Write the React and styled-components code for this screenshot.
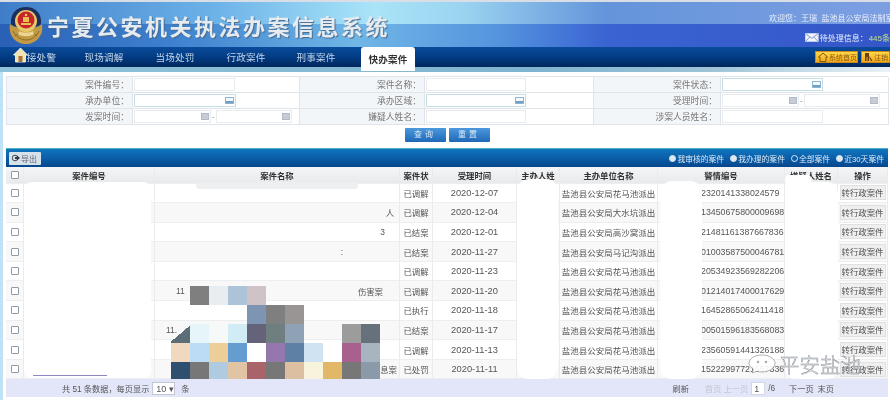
import React from "react";
import styled, { createGlobalStyle } from "styled-components";

const GlobalStyle = createGlobalStyle`
  html, body {
    margin: 0;
    padding: 0;
    background: #fff;
  }
  body {
    font-family: "Liberation Sans", "Noto Sans CJK SC", sans-serif;
    color: #444;
  }
  * {
    box-sizing: border-box;
  }
`;

const Page = styled.div`
  position: relative;
  width: 890px;
  height: 400px;
  overflow: hidden;
  background: #fff;
  filter: blur(0.45px);
`;

const Header = styled.header`
  display: flex;
  height: 47px;
  padding: 4px 0 0 8px;
  border-top: 2px solid #d8dde6;
  background:
    linear-gradient(90deg, #3f7dc8 0%, #6cb2e8 24%, #a9e4f8 42%, #9ad4f0 52%, #6494da 68%, #7d9fe2 100%) 0 0 / 100% 22px no-repeat,
    linear-gradient(90deg, #2a60b6 0%, #3f82cf 20%, #70b6e6 40%, #5494de 56%, #3a64d2 68%, #3556c8 100%) 0 22px / 100% 24px no-repeat;
`;

const Title = styled.h1`
  margin: 4px 0 0 3px;
  font-family: "Noto Sans CJK SC", sans-serif;
  font-size: 22px;
  line-height: 30px;
  font-weight: 700;
  letter-spacing: 2.5px;
  white-space: nowrap;
  color: #e6ebf0;
  text-shadow: 1px 1px 1px #4a6a8c;
`;

const UserBox = styled.div`
  margin-left: auto;
  width: 121px;
  overflow: hidden;
  white-space: nowrap;
  font-size: 8px;
  color: #e8effc;
`;

const Welcome = styled.div`
  margin-top: 6px;
  height: 14px;
  line-height: 14px;
`;

const Pending = styled.div`
  display: flex;
  align-items: center;
  gap: 1px;
  margin: 5px 0 0 36px;
  height: 12px;
  b {
    font-weight: 400;
    color: #bfe38a;
  }
`;

const Nav = styled.nav`
  display: flex;
  align-items: flex-start;
  height: 20px;
  padding-left: 13px;
  background: linear-gradient(180deg, #0a4c9c 0%, #023a80 55%, #02275c 100%);
`;

const NavItem = styled.div`
  position: relative;
  z-index: 1;
  display: flex;
  align-items: center;
  justify-content: center;
  flex: none;
  width: ${(p) => p.$w}px;
  height: ${(p) => (p.$active ? "24px" : "20px")};
  margin-left: ${(p) => p.$ml || 0}px;
  font-size: 9.6px;
  letter-spacing: 0.2px;
  white-space: nowrap;
  color: ${(p) => (p.$active ? "#333" : "#c3d5e8")};
  font-weight: ${(p) => (p.$active ? 700 : 400)};
  background: ${(p) => (p.$active ? "#fff" : "transparent")};
  border-radius: ${(p) => (p.$active ? "3px 3px 0 0" : "0")};
`;

const NavTools = styled.div`
  display: flex;
  gap: 3px;
  margin: 4px 0 0 auto;
`;

const ToolButton = styled.div`
  display: flex;
  align-items: center;
  gap: 1px;
  height: 12px;
  width: ${(p) => p.$w}px;
  padding-left: 2px;
  font-size: 7px;
  color: #8a5a10;
  background: linear-gradient(180deg, #ffd84a, #f2a81c);
  border: 1px solid #c98a18;
`;

const Strip = styled.div`
  height: 5px;
  background: linear-gradient(90deg, #8fc3da 0%, #7fb4d0 60%, #9fc4d8 80%, #eaf2f6 100%);
`;

const Main = styled.main`
  height: 328px;
  padding: 4px 2px 0 6px;
  background: linear-gradient(90deg, #bfe2f6 0, #bfe2f6 3px, #fff 3px);
`;

const FormGrid = styled.div`
  display: grid;
  grid-template-columns: 126px 167px 125px 169px 127px 168px;
  grid-auto-rows: 16px;
  border-top: 1px solid #dfe5ea;
  border-left: 1px solid #dfe5ea;
`;

const FormLabel = styled.div`
  display: flex;
  align-items: center;
  justify-content: flex-end;
  padding-right: 3px;
  font-size: 8.8px;
  color: #777;
  background: #f3f6f9;
  border-right: 1px solid #dfe5ea;
  border-bottom: 1px solid #dfe5ea;
`;

const FormValue = styled.div`
  display: flex;
  align-items: center;
  gap: 1px;
  padding-left: 1px;
  border-right: 1px solid #dfe5ea;
  border-bottom: 1px solid #dfe5ea;
  font-size: 8px;
  color: #888;
`;

const Field = styled.div`
  display: flex;
  align-items: center;
  justify-content: flex-end;
  width: ${(p) => p.$w}px;
  height: 13px;
  padding-right: 1px;
  background: #fff;
  border: 1px solid ${(p) => (p.$select ? "#c6dde6" : "#e9ecef")};
`;

const SelectIcon = styled.span`
  width: 9px;
  height: 7px;
  background: linear-gradient(180deg, #f4f8fb 0 55%, #6fa0c6 55%);
  border: 1px solid #8db4d0;
`;

const DateIcon = styled.span`
  width: 8px;
  height: 7px;
  background: #c8ccd6;
  border: 1px solid #b4b9c6;
`;

const FormActions = styled.div`
  display: flex;
  justify-content: center;
  gap: 3px;
  padding-top: 3px;
`;

const BlueButton = styled.div`
  width: 41px;
  height: 14px;
  line-height: 14px;
  text-align: center;
  font-size: 8px;
  letter-spacing: 3px;
  color: #d9e8f6;
  background: linear-gradient(180deg, #4c98dc, #1f68b8);
  border-radius: 1px;
`;

const Toolbar = styled.div`
  display: flex;
  align-items: center;
  justify-content: space-between;
  height: 19px;
  margin-top: 6px;
  padding: 0 4px 0 3px;
  border-top: 1px solid #4fb0c8;
  background: linear-gradient(180deg, #0f76bd 0%, #0a5ea8 50%, #06468c 100%);
`;

const ExportButton = styled.div`
  display: flex;
  align-items: center;
  gap: 1px;
  width: 32px;
  height: 13px;
  padding-left: 3px;
  font-size: 8px;
  color: #667;
  background: #d6e2ea;
  border-radius: 1px;
`;

const Filters = styled.div`
  display: flex;
  gap: 6px;
  font-size: 7.8px;
  color: #dbe9f6;
`;

const Filter = styled.span`
  display: flex;
  align-items: center;
  gap: 1px;
  white-space: nowrap;
  &::before {
    content: "";
    width: 5px;
    height: 5px;
    border-radius: 50%;
    background: ${(p) => (p.$on ? "#0a5ea8" : "#dfe8f0")};
    border: 1px solid #dfe8f0;
  }
`;

const GridRow = styled.div`
  display: grid;
  grid-template-columns: 18px 131px 245px 33px 84px 43px 98px 127px 53px 50px;
  height: ${(p) => (p.$head ? "16.5px" : "19.6px")};
  align-items: stretch;
  background: ${(p) => (p.$head ? "linear-gradient(180deg, #f4f5f6, #e8eaec)" : p.$alt ? "#f8f8f8" : "#fff")};
  border-bottom: 1px solid #eceef0;
`;

const Cell = styled.div`
  display: flex;
  align-items: center;
  justify-content: ${(p) => p.$align || "flex-start"};
  min-width: 0;
  overflow: hidden;
  white-space: nowrap;
  padding-left: ${(p) => p.$pl || 0}px;
  padding-right: ${(p) => p.$pr || 0}px;
  font-size: ${(p) => p.$size || 8.4}px;
  font-weight: ${(p) => (p.$head ? 700 : 400)};
  color: ${(p) => (p.$head ? "#333" : "#555")};
  border-right: 1px solid #e9ebee;
`;

const Check = styled.span`
  width: 8px;
  height: 8px;
  border: 1px solid #8f9aa4;
  border-radius: 1px;
  background: #fff;
`;

const TransferButton = styled.div`
  width: 46px;
  height: 15px;
  line-height: 14px;
  text-align: center;
  font-size: 8.4px;
  color: #555;
  background: #efefef;
  border: 1px solid #e0e0e0;
`;

const TableBody = styled.div`
  position: relative;
`;

const Blob = styled.div`
  position: absolute;
  left: ${(p) => p.$x}px;
  top: ${(p) => p.$y}px;
  width: ${(p) => p.$w}px;
  height: ${(p) => p.$h}px;
  background: ${(p) => p.$bg || "#fff"};
  border-radius: ${(p) => p.$r || "8px"};
`;

const Mosaic = styled.div`
  position: absolute;
  left: 165px;
  top: 102px;
  display: grid;
  grid-template-columns: repeat(11, 19px);
  grid-auto-rows: 19px;
  height: 93px;
  overflow: hidden;
`;

const MosaicCell = styled.div`
  background: ${(p) => p.$c || "transparent"};
`;

const Scribble = styled.div`
  position: absolute;
  left: 27px;
  top: 191px;
  width: 74px;
  height: 1px;
  background: #8f86c4;
`;

const Footer = styled.div`
  position: relative;
  display: flex;
  align-items: center;
  height: 18px;
  padding-left: 56px;
  font-size: 8.2px;
  color: #555;
  background: #e2e6f8;
`;

const PageSize = styled.span`
  display: inline-block;
  width: 23px;
  height: 13px;
  line-height: 12px;
  margin: 0 6px 0 3px;
  padding-left: 3px;
  font-size: 9px;
  background: #fff;
  border: 1px solid #c4c8d4;
`;

const Pager = styled.div`
  display: flex;
  align-items: center;
  margin-left: auto;
  margin-right: 54px;
`;

const PagerLink = styled.span`
  margin-left: ${(p) => p.$ml || 0}px;
  white-space: nowrap;
  color: ${(p) => (p.$off ? "#c2c6d4" : "#555")};
`;

const PageInput = styled.span`
  width: 14px;
  height: 13px;
  line-height: 12px;
  margin: 0 3px 0 3px;
  padding-left: 2px;
  font-size: 9px;
  background: #fff;
  border: 1px solid #d4d8e4;
`;

const Watermark = styled.div`
  position: absolute;
  left: 748px;
  top: 349px;
  display: flex;
  align-items: center;
  gap: 3px;
`;

const WatermarkText = styled.span`
  font-family: "Noto Sans CJK SC", sans-serif;
  font-size: 20.5px;
  line-height: 30px;
  font-weight: 300;
  color: rgba(255, 255, 255, 0.8);
  -webkit-text-stroke: 0.5px #868d95;
`;

const forms = [
  ["案件编号：", { w: 101 }],
  ["案件名称：", { w: 100 }],
  ["案件状态：", { w: 101, select: true }],
  ["承办单位：", { w: 102, select: true }],
  ["承办区域：", { w: 100, select: true }],
  ["受理时间：", { date: true }],
  ["发案时间：", { date: true }],
  ["嫌疑人姓名：", { w: 100 }],
  ["涉案人员姓名：", { w: 101 }],
];

const columns = ["案件编号", "案件名称", "案件状", "受理时间", "主办人姓", "主办单位名称", "警情编号", "嫌疑人姓名", "操作"];

const rows = [
  { state: "已调解", date: "2020-12-07", unit: "盐池县公安局花马池派出", no: "2320141338024579" },
  { state: "已调解", date: "2020-12-04", unit: "盐池县公安局大水坑派出", no: "13450675800009698", right: "人" },
  { state: "已结案", date: "2020-12-01", unit: "盐池县公安局高沙窝派出", no: "21481161387667836", right: "3", pr: 14 },
  { state: "已结案", date: "2020-11-27", unit: "盐池县公安局马记沟派出", no: "01003587500046781", right: ":", pr: 56 },
  { state: "已调解", date: "2020-11-23", unit: "盐池县公安局花马池派出", no: "20534923569282206" },
  { state: "已调解", date: "2020-11-20", unit: "盐池县公安局花马池派出", no: "01214017400017629", left: "11", pl: 21, right: "伤害案", pr: 16 },
  { state: "已执行", date: "2020-11-18", unit: "盐池县公安局花马池派出", no: "16452865062411418" },
  { state: "已结案", date: "2020-11-17", unit: "盐池县公安局花马池派出", no: "00501596183568083", left: "11.", pl: 11 },
  { state: "已调解", date: "2020-11-13", unit: "盐池县公安局花马池派出", no: "23560591441326188" },
  { state: "已处罚", date: "2020-11-11", unit: "盐池县公安局花马池派出", no: "15222997721557336", right: "息案", pr: 2 },
];

const mosaic = [
  [null, "#7f7f7f", "#e8edf1", "#acc3d8", "#cfc3c8", null, null, null, null, null, null],
  [null, null, null, null, "#7d95b3", "#7f7f7f", "#9a9595", null, null, null, null],
  ["linear-gradient(140deg, transparent 50%, #5d6d78 50%)", "#e6f5f9", "#f7f8f8", "#d2ecf6", "#65637a", "#6f7f80", "#8fa1b5", null, null, "#9c9c9c", "#67717c"],
  ["#f0d9bf", "#bcdcf5", "#eccf98", "#659dd1", "#ffffff", "#9377ad", "#5f80a5", "#cfe3f2", "#ffffff", "#a8608f", "#a6b5bf"],
  ["#2f4f70", "#777777", "#afcbe0", "#e0c4a4", "#a86468", "#777777", "#dcbfa0", "#f7f3dc", "#e0b868", "#777777", "#8a9aa8"],
];

function Emblem() {
  return (
    <svg width="36" height="39" viewBox="0 0 36 39">
      <path d="M2 18 C0 30 8 38 18 38 C28 38 36 30 34 18 C28 24 8 24 2 18Z" fill="#c29a44" />
      <path d="M5 25 C8 31 13 34 18 34 C23 34 28 31 31 25 M7 30 L11 27 M29 30 L25 27" fill="none" stroke="#8a6a2a" strokeWidth="1" />
      <path d="M3 18 C2 7 9 1 18 1 C27 1 34 7 33 18 C28 23 8 23 3 18Z" fill="#1c2f5c" />
      <circle cx="18" cy="15" r="11" fill="#e8c96a" />
      <circle cx="18" cy="14" r="8.5" fill="#c8242c" />
      <path d="M13 17 h10 v2 h-10z M15 11 h6 v5 h-6z" fill="#e8c050" />
      <circle cx="18" cy="9" r="1.2" fill="#f4d860" />
      <path d="M10 28 C14 31 22 31 26 28 L25 25 C21 27 15 27 11 25Z" fill="#ecd592" />
    </svg>
  );
}

function HomeIcon() {
  return (
    <svg width="15" height="16" viewBox="0 0 15 16">
      <path d="M7.5 1 L14.5 8 L12.5 8 L12.5 15 L2.5 15 L2.5 8 L0.5 8Z" fill="#f3e2b4" stroke="#fff" strokeWidth="0.8" />
      <rect x="5.5" y="9" width="4" height="6" fill="#a8763a" />
    </svg>
  );
}

function SmallHome() {
  return (
    <svg width="10" height="10" viewBox="0 0 10 10">
      <path d="M5 1 L9.5 5 L8 5 L8 9.5 L2 9.5 L2 5 L0.5 5Z" fill="none" stroke="#7a5a10" strokeWidth="1" />
    </svg>
  );
}

function KeyIcon() {
  return (
    <svg width="9" height="10" viewBox="0 0 9 10">
      <path d="M1 1 h4 v8 h-1.5 v-4 h-1 v4 h-1.5z M5.5 4 l3 5 h-1.5 l-1.5-3z" fill="#6a4410" />
    </svg>
  );
}

function Envelope() {
  return (
    <svg width="17" height="11" viewBox="0 0 17 11">
      <rect x="0.5" y="0.5" width="16" height="10" fill="#f1f5fb" stroke="#c8d6f0" />
      <path d="M1 1 L8.5 6.5 L16 1 M1 10 L6 5 M16 10 L11 5" fill="none" stroke="#5570b8" strokeWidth="0.9" />
    </svg>
  );
}

function ExportIcon() {
  return (
    <svg width="8" height="8" viewBox="0 0 8 8">
      <circle cx="3" cy="4" r="2.8" fill="none" stroke="#445" strokeWidth="1" />
      <path d="M3 3 h2 v-1.5 l3 2.5 l-3 2.5 v-1.5 h-2z" fill="#334" />
    </svg>
  );
}

function WeChatIcon() {
  return (
    <svg width="28" height="20" viewBox="0 0 28 20">
      <path d="M14 1 C21 1 27 4.5 27 9.5 C27 14 21 18 14 18 C12 18 10.5 17.7 9 17.2 L4 19 L5.4 15 C2.8 13.4 1 11.6 1 9.5 C1 4.5 7 1 14 1Z" fill="rgba(255,255,255,0.9)" stroke="#8c9298" strokeWidth="0.7" />
      <circle cx="10" cy="8" r="1.2" fill="#a4a8ac" />
      <circle cx="18" cy="8" r="1.2" fill="#a4a8ac" />
    </svg>
  );
}

function FieldGroup({ spec }) {
  if (spec.date) {
    return (
      <>
        <Field $w={77}><DateIcon /></Field>-
        <Field $w={76}><DateIcon /></Field>
      </>
    );
  }
  return <Field $w={spec.w} $select={spec.select}>{spec.select && <SelectIcon />}</Field>;
}

// the name column only keeps the bits of text left visible around the redaction
function nameAlign(r) {
  if (r.left && r.right) return "space-between";
  return r.left ? "flex-start" : "flex-end";
}

function App() {
  return (
    <Page>
      <GlobalStyle />
      <Header>
        <Emblem />
        <Title>宁夏公安机关执法办案信息系统</Title>
        <UserBox>
          <Welcome>欢迎您：王瑞&nbsp;&nbsp;盐池县公安局法制室</Welcome>
          <Pending><Envelope />待处理信息：<b>445条</b></Pending>
        </UserBox>
      </Header>
      <Nav>
        <HomeIcon />
        <NavItem $w={27}>接处警</NavItem>
        <NavItem $w={40} $ml={29}>现场调解</NavItem>
        <NavItem $w={40} $ml={31}>当场处罚</NavItem>
        <NavItem $w={40} $ml={31}>行政案件</NavItem>
        <NavItem $w={40} $ml={30}>刑事案件</NavItem>
        <NavItem $w={54} $ml={25} $active>快办案件</NavItem>
        <NavTools>
          <ToolButton $w={43}><SmallHome />系统首页</ToolButton>
          <ToolButton $w={29}><KeyIcon />注销</ToolButton>
        </NavTools>
      </Nav>
      <Strip />
      <Main>
        <FormGrid>
          {forms.map(([label, spec]) => (
            <React.Fragment key={label}>
              <FormLabel>{label}</FormLabel>
              <FormValue><FieldGroup spec={spec} /></FormValue>
            </React.Fragment>
          ))}
        </FormGrid>
        <FormActions>
          <BlueButton>查询</BlueButton>
          <BlueButton>重置</BlueButton>
        </FormActions>
        <Toolbar>
          <ExportButton><ExportIcon />导出</ExportButton>
          <Filters>
            <Filter>我审核的案件</Filter>
            <Filter>我办理的案件</Filter>
            <Filter $on>全部案件</Filter>
            <Filter>近30天案件</Filter>
          </Filters>
        </Toolbar>
        <GridRow $head>
          <Cell $align="center"><Check /></Cell>
          {columns.map((c) => (
            <Cell key={c} $head $align="center">{c}</Cell>
          ))}
        </GridRow>
        <TableBody>
          {rows.map((r, i) => (
            <GridRow key={r.date} $alt={i % 2 === 1}>
              <Cell $align="center"><Check /></Cell>
              <Cell />
              <Cell $align={nameAlign(r)} $pl={r.pl} $pr={r.pr || 5}>
                {r.left && <span>{r.left}</span>}
                {r.right && <span>{r.right}</span>}
              </Cell>
              <Cell $align="center">{r.state}</Cell>
              <Cell $align="center" $size={9.3}>{r.date}</Cell>
              <Cell />
              <Cell $align="center" $size={8.5}>{r.unit}</Cell>
              <Cell $pl={43} $size={8.8}>{r.no}</Cell>
              <Cell />
              <Cell $align="center"><TransferButton>转行政案件</TransferButton></Cell>
            </GridRow>
          ))}
          <Blob $x={18} $y={-2} $w={127} $h={196} />
          <Blob $x={190} $y={-2} $w={162} $h={7} $bg="#eeeff0" $r="4px" />
          <Blob $x={511} $y={-5} $w={41} $h={200} $r="12px" />
          <Blob $x={654} $y={-3} $w={42} $h={198} $r="12px" />
          <Blob $x={779} $y={-2} $w={53} $h={197} $r="10px" />
          <Blob $x={779} $y={-9} $w={26} $h={10} $r="4px" />
          <Mosaic>
            {mosaic.flat().map((c, i) => (
              <MosaicCell key={i} $c={c} />
            ))}
          </Mosaic>
          <Scribble />
        </TableBody>
        <Footer>
          共 51 条数据，每页显示
          <PageSize>10 ▾</PageSize>
          条
          <Pager>
            <PagerLink>刷新</PagerLink>
            <PagerLink $off $ml={16}>首页 上一页</PagerLink>
            <PageInput>1</PageInput>
            /6
            <PagerLink $ml={14}>下一页</PagerLink>
            <PagerLink $ml={4}>末页</PagerLink>
          </Pager>
        </Footer>
      </Main>
      <Watermark>
        <WeChatIcon />
        <WatermarkText>平安盐池</WatermarkText>
      </Watermark>
    </Page>
  );
}

export default App;
